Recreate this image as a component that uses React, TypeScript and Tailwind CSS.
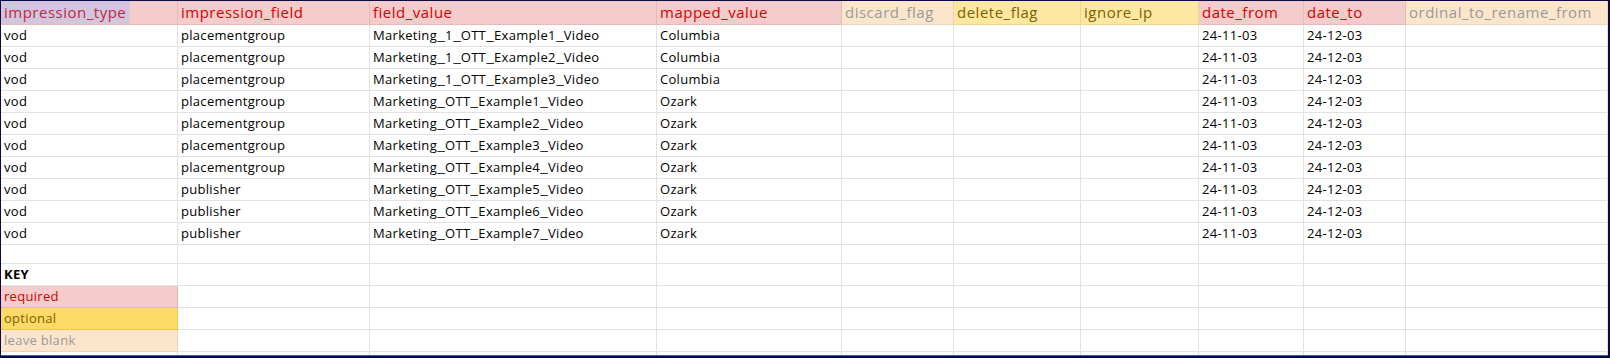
import React from "react";

type Kind = "req" | "opt" | "blank";

const cols = [
  { name: "impression_type", kind: "req" as Kind },
  { name: "impression_field", kind: "req" as Kind },
  { name: "field_value", kind: "req" as Kind },
  { name: "mapped_value", kind: "req" as Kind },
  { name: "discard_flag", kind: "blank" as Kind },
  { name: "delete_flag", kind: "opt" as Kind },
  { name: "ignore_ip", kind: "opt" as Kind },
  { name: "date_from", kind: "req" as Kind },
  { name: "date_to", kind: "req" as Kind },
  { name: "ordinal_to_rename_from", kind: "blank" as Kind },
];

const rows: string[][] = [
  ["vod", "placementgroup", "Marketing_1_OTT_Example1_Video", "Columbia"],
  ["vod", "placementgroup", "Marketing_1_OTT_Example2_Video", "Columbia"],
  ["vod", "placementgroup", "Marketing_1_OTT_Example3_Video", "Columbia"],
  ["vod", "placementgroup", "Marketing_OTT_Example1_Video", "Ozark"],
  ["vod", "placementgroup", "Marketing_OTT_Example2_Video", "Ozark"],
  ["vod", "placementgroup", "Marketing_OTT_Example3_Video", "Ozark"],
  ["vod", "placementgroup", "Marketing_OTT_Example4_Video", "Ozark"],
  ["vod", "publisher", "Marketing_OTT_Example5_Video", "Ozark"],
  ["vod", "publisher", "Marketing_OTT_Example6_Video", "Ozark"],
  ["vod", "publisher", "Marketing_OTT_Example7_Video", "Ozark"],
];

const headerCls: Record<Kind, string> = {
  req: "bg-[#f4cccc] text-[#d80000] border-[#e7b9b9]",
  opt: "bg-[#fce8a0] text-[#7f6000] border-[#efd58a]",
  blank: "bg-[#fce5cd] text-[#9a9a9a] border-[#ecd3ba]",
};

const gridCols =
  "grid grid-cols-[177px_192px_287px_185px_112px_127px_118px_105px_102px_202px]";

function Wide({ text }: { text: string }) {
  const parts = text.split("_");
  return (
    <>
      {parts.map((p, i) => (
        <React.Fragment key={i}>
          {i > 0 && (
            <span className="inline-block w-[8px] text-center tracking-normal scale-x-[1.35]">
              _
            </span>
          )}
          {p}
        </React.Fragment>
      ))}
    </>
  );
}

function Cell({
  children,
  cls = "",
}: {
  children?: React.ReactNode;
  cls?: string;
}) {
  return (
    <div
      className={
        "flex items-center overflow-hidden whitespace-nowrap pl-[3px] border-r border-b border-[#e2e2e2] tracking-[0.3px] text-[13px] " +
        cls
      }
    >
      <span>{children}</span>
    </div>
  );
}

export default function App() {
  const empty = (n: number, h: string, keyCell?: React.ReactNode, keyCls = "") => (
    <>
      <Cell cls={h + " " + keyCls}>{keyCell}</Cell>
      {Array.from({ length: n }).map((_, i) => (
        <Cell key={i} cls={h} />
      ))}
    </>
  );
  return (
    <div
      className="w-[1610px] h-[358px] overflow-hidden bg-white border-t border-l border-r-2 border-b-2 border-t-[#0b0a45] border-l-[#0b0a45] border-r-[#0b0a45] border-b-[#0b0a45]"
      style={{ fontFamily: "'Open Sans', Lato, sans-serif" }}
    >
      <div className="h-[355px] overflow-hidden border-b border-[#3a66b0]">
        <div className={gridCols}>
          {cols.map((c, i) => (
            <div
              key={c.name}
              className={
                "h-[24px] flex items-stretch overflow-hidden whitespace-nowrap border-r border-b text-[15px] tracking-[0.5px] " +
                headerCls[c.kind]
              }
            >
              {i === 0 ? (
                <span className="flex items-center pl-[3px] pr-[4px] bg-[#d2c6de] text-[#c52543]">
                  {c.name}
                </span>
              ) : (
                <span className="flex items-center pl-[3px]">{c.name}</span>
              )}
            </div>
          ))}
          {rows.map((r, ri) => (
            <React.Fragment key={ri}>
              {r.map((v, ci) => (
                <Cell key={ci} cls="h-[22px] text-black">
                  <Wide text={v} />
                </Cell>
              ))}
              <Cell cls="h-[22px]" />
              <Cell cls="h-[22px]" />
              <Cell cls="h-[22px]" />
              <Cell cls="h-[22px] text-black">24-11-03</Cell>
              <Cell cls="h-[22px] text-black">24-12-03</Cell>
              <Cell cls="h-[22px]" />
            </React.Fragment>
          ))}
          {empty(9, "h-[19px]")}
          {empty(9, "h-[22px]", <span className="font-bold text-black">KEY</span>)}
          {empty(
            9,
            "h-[22px]",
            <span className="text-[#d80000]">required</span>,
            "bg-[#f4cccc] border-[#e4b4b4]"
          )}
          {empty(
            9,
            "h-[22px]",
            <span className="text-[#7f6000]">optional</span>,
            "bg-[#fdd966] border-[#f0c850]"
          )}
          {empty(
            9,
            "h-[22px]",
            <span className="text-[#9a9a9a]">leave blank</span>,
            "bg-[#fce5cd] border-[#ecd3ba]"
          )}
          {empty(9, "h-[22px]")}
        </div>
      </div>
    </div>
  );
}
